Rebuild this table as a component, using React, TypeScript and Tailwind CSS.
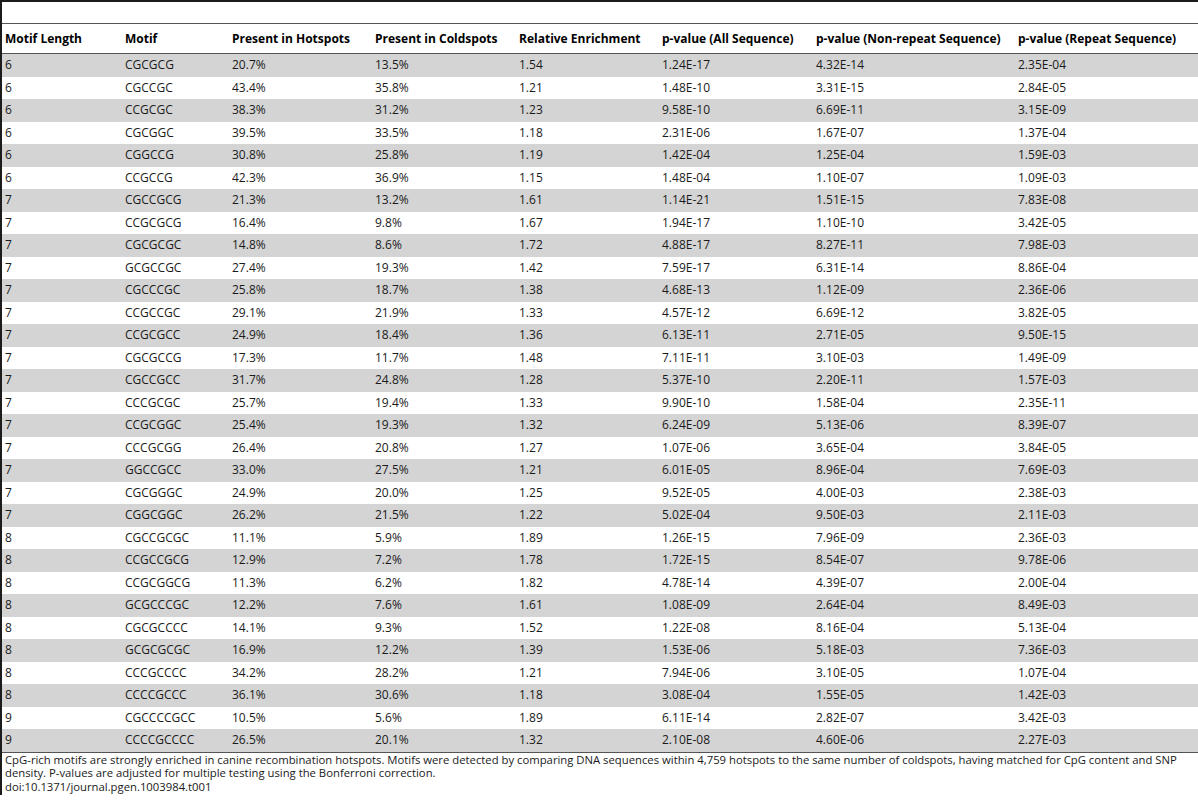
import React from "react";

const rows: string[][] = [
  ["6", "CGCGCG", "20.7%", "13.5%", "1.54", "1.24E-17", "4.32E-14", "2.35E-04"],
  ["6", "CGCCGC", "43.4%", "35.8%", "1.21", "1.48E-10", "3.31E-15", "2.84E-05"],
  ["6", "CCGCGC", "38.3%", "31.2%", "1.23", "9.58E-10", "6.69E-11", "3.15E-09"],
  ["6", "CGCGGC", "39.5%", "33.5%", "1.18", "2.31E-06", "1.67E-07", "1.37E-04"],
  ["6", "CGGCCG", "30.8%", "25.8%", "1.19", "1.42E-04", "1.25E-04", "1.59E-03"],
  ["6", "CCGCCG", "42.3%", "36.9%", "1.15", "1.48E-04", "1.10E-07", "1.09E-03"],
  ["7", "CGCCGCG", "21.3%", "13.2%", "1.61", "1.14E-21", "1.51E-15", "7.83E-08"],
  ["7", "CCGCGCG", "16.4%", "9.8%", "1.67", "1.94E-17", "1.10E-10", "3.42E-05"],
  ["7", "CGCGCGC", "14.8%", "8.6%", "1.72", "4.88E-17", "8.27E-11", "7.98E-03"],
  ["7", "GCGCCGC", "27.4%", "19.3%", "1.42", "7.59E-17", "6.31E-14", "8.86E-04"],
  ["7", "CGCCCGC", "25.8%", "18.7%", "1.38", "4.68E-13", "1.12E-09", "2.36E-06"],
  ["7", "CCGCCGC", "29.1%", "21.9%", "1.33", "4.57E-12", "6.69E-12", "3.82E-05"],
  ["7", "CCGCGCC", "24.9%", "18.4%", "1.36", "6.13E-11", "2.71E-05", "9.50E-15"],
  ["7", "CGCGCCG", "17.3%", "11.7%", "1.48", "7.11E-11", "3.10E-03", "1.49E-09"],
  ["7", "CGCCGCC", "31.7%", "24.8%", "1.28", "5.37E-10", "2.20E-11", "1.57E-03"],
  ["7", "CCCGCGC", "25.7%", "19.4%", "1.33", "9.90E-10", "1.58E-04", "2.35E-11"],
  ["7", "CCGCGGC", "25.4%", "19.3%", "1.32", "6.24E-09", "5.13E-06", "8.39E-07"],
  ["7", "CCCGCGG", "26.4%", "20.8%", "1.27", "1.07E-06", "3.65E-04", "3.84E-05"],
  ["7", "GGCCGCC", "33.0%", "27.5%", "1.21", "6.01E-05", "8.96E-04", "7.69E-03"],
  ["7", "CGCGGGC", "24.9%", "20.0%", "1.25", "9.52E-05", "4.00E-03", "2.38E-03"],
  ["7", "CGGCGGC", "26.2%", "21.5%", "1.22", "5.02E-04", "9.50E-03", "2.11E-03"],
  ["8", "CGCCGCGC", "11.1%", "5.9%", "1.89", "1.26E-15", "7.96E-09", "2.36E-03"],
  ["8", "CCGCCGCG", "12.9%", "7.2%", "1.78", "1.72E-15", "8.54E-07", "9.78E-06"],
  ["8", "CCGCGGCG", "11.3%", "6.2%", "1.82", "4.78E-14", "4.39E-07", "2.00E-04"],
  ["8", "GCGCCCGC", "12.2%", "7.6%", "1.61", "1.08E-09", "2.64E-04", "8.49E-03"],
  ["8", "CGCGCCCC", "14.1%", "9.3%", "1.52", "1.22E-08", "8.16E-04", "5.13E-04"],
  ["8", "GCGCGCGC", "16.9%", "12.2%", "1.39", "1.53E-06", "5.18E-03", "7.36E-03"],
  ["8", "CCCGCCCC", "34.2%", "28.2%", "1.21", "7.94E-06", "3.10E-05", "1.07E-04"],
  ["8", "CCCCGCCC", "36.1%", "30.6%", "1.18", "3.08E-04", "1.55E-05", "1.42E-03"],
  ["9", "CGCCCCGCC", "10.5%", "5.6%", "1.89", "6.11E-14", "2.82E-07", "3.42E-03"],
  ["9", "CCCCGCCCC", "26.5%", "20.1%", "1.32", "2.10E-08", "4.60E-06", "2.27E-03"],
];

const headers = [
  "Motif Length",
  "Motif",
  "Present in Hotspots",
  "Present in Coldspots",
  "Relative Enrichment",
  "p-value (All Sequence)",
  "p-value (Non-repeat Sequence)",
  "p-value (Repeat Sequence)",
];

const cols = "grid grid-cols-[120px_107px_143px_144px_143px_154px_202px_1fr]";

export default function App() {
  return (
    <div
      className="w-[1198px] h-[800px] bg-white text-[#1a1a1a] overflow-hidden"
      style={{ fontFamily: '"Open Sans", "Noto Sans", sans-serif' }}
    >
      <div className="h-[2px] bg-[#1c1c1c]" />
      <div className="border-l-[2px] border-[#1c1c1c] h-[793px] overflow-hidden">
        <div className="h-[21px]" />
        <div className="h-px bg-[#555]" />
        <div className={`${cols} h-[30px] items-center text-[12px] font-bold text-black border-b border-[#555]`}>
          {headers.map((h) => (
            <div key={h} className="pl-[3px] whitespace-nowrap leading-[16px]">
              {h}
            </div>
          ))}
        </div>
        <div className="border-b border-[#555]">
          {rows.map((r, i) => (
            <div
              key={i}
              className={`${cols} h-[22.5px] items-center text-[12px] ${i % 2 === 0 ? "bg-[#d4d4d4]" : "bg-white"}`}
            >
              {r.map((c, j) => (
                <div key={j} className="pl-[3px] whitespace-nowrap leading-[16px]">
                  {c}
                </div>
              ))}
            </div>
          ))}
        </div>
        <div className="pl-[3px] pr-[2px] mt-0 text-[11.3px] leading-[13.5px] text-[#1a1a1a]">
          <p>
            CpG-rich motifs are strongly enriched in canine recombination hotspots. Motifs were detected by comparing DNA sequences within 4,759 hotspots to the same number of coldspots, having matched for CpG content and SNP density. P-values are adjusted for multiple testing using the Bonferroni correction.
          </p>
          <p>doi:10.1371/journal.pgen.1003984.t001</p>
        </div>
      </div>
    </div>
  );
}
